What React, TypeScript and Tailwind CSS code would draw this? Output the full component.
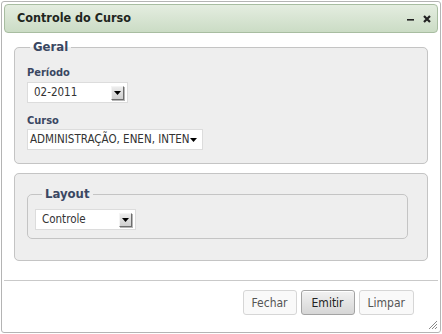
import React from 'react';

const font = { fontFamily: '"DejaVu Sans Condensed", "DejaVu Sans", Tahoma, sans-serif' };

// small old-style dropdown button used by the native-looking selects
function DropButton() {
  return (
    <div className="w-[13px] h-[14px] border border-t-[#f4f4f4] border-l-[#f4f4f4] border-r-[#6d6d6d] border-b-[#6d6d6d] bg-gradient-to-b from-[#ececec] to-[#cfcfcf] flex items-center justify-center shadow-[1px_1px_0_#b5b5b5]">
      <svg width="7" height="5" viewBox="0 0 7 5">
        <path d="M0 1h7L3.5 5z" fill="#000" />
      </svg>
    </div>
  );
}

function Select({ value, width }: { value: string; width: string }) {
  return (
    <div className={`${width} h-[21px] bg-white border border-[#dcdcdc] flex items-center pl-[6px] pr-[3px] justify-between`}>
      <span className="text-[11.5px] text-[#333]">{value}</span>
      <DropButton />
    </div>
  );
}

function Btn({ label, primary }: { label: string; primary?: boolean }) {
  return (
    <button
      className={
        primary
          ? 'h-[25px] px-[10px] rounded-[3px] border border-[#a3a3a3] bg-gradient-to-b from-[#f2f2f2] to-[#d6d6d6] text-[12px] text-[#222] shadow-[inset_0_1px_0_#fff]'
          : 'h-[25px] px-[8px] rounded-[3px] border border-[#d6d6d6] bg-[#f9f9f9] text-[12px] text-[#555]'
      }
    >
      {label}
    </button>
  );
}

export default function App() {
  return (
    <div style={font} className="w-[442px] h-[334px] bg-white overflow-hidden">
      <div className="ml-[1px] mt-[1px] w-[440px] h-[332px] border border-[#b4b4b4] rounded-[3px] bg-white flex flex-col p-[2px]">
        {/* Title bar */}
        <div className="h-[29px] rounded-[4px] border border-[#a8bda1] bg-gradient-to-b from-[#e4ede0] to-[#cbdcc5] flex items-center justify-between pl-[12px] pr-[6px]">
          <span className="text-[12.5px] font-bold text-[#1e261e]">Controle do Curso</span>
          <div className="flex items-center gap-[9px]">
            <svg width="7" height="8" viewBox="0 0 7 8">
              <rect x="0" y="4" width="7" height="1.6" fill="#222" />
            </svg>
            <svg width="8" height="8" viewBox="0 0 8 8">
              <path d="M1 1l6 6M7 1l-6 6" stroke="#222" strokeWidth="2.2" />
            </svg>
          </div>
        </div>

        {/* Content */}
        <div className="flex-1 px-[10px] pt-[7px]">
          <fieldset className="border border-[#c4c4c4] rounded-[5px] bg-[#eeeeee] pl-[12px] pr-[12px] pb-[13px] pt-[12px]">
            <legend className="ml-[3px] px-[3px] text-[13px] font-bold text-[#3a4762] leading-[14px]">Geral</legend>
            <div className="text-[11px] font-bold text-[#3a4762] leading-[13px]">Período</div>
            <div className="mt-[3px]">
              <Select value="02-2011" width="w-[101px]" />
            </div>
            <div className="mt-[11px] text-[11px] font-bold text-[#3a4762] leading-[13px]">Curso</div>
            <div className="mt-[2px] w-[176px] h-[21px] bg-white border border-[#dcdcdc] flex items-center justify-between pl-[2px] pr-[5px]">
              <span className="text-[11.5px] text-[#333] whitespace-nowrap">ADMINISTRAÇÃO, ENEN, INTEN</span>
              <svg width="7" height="4" viewBox="0 0 7 4" className="shrink-0">
                <path d="M0 0h7L3.5 4z" fill="#000" />
              </svg>
            </div>
          </fieldset>

          <fieldset className="mt-[9px] border border-[#c4c4c4] rounded-[5px] bg-[#eeeeee] pl-[12px] pr-[19px] pt-[13px] pb-[21px]">
            <fieldset className="border border-[#c4c4c4] rounded-[5px] pl-[7px] pb-[8px] pt-[8px]">
              <legend className="ml-[7px] px-[3px] text-[13px] font-bold text-[#3a4762] leading-[14px]">Layout</legend>
              <Select value="Controle" width="w-[101px]" />
            </fieldset>
          </fieldset>
        </div>

        {/* Footer */}
        <div className="border-t border-[#c9c9c9] h-[50px] relative flex items-start justify-end pt-[9px] pr-[24px] gap-[4px]">
          <Btn label="Fechar" />
          <Btn label="Emitir" primary />
          <Btn label="Limpar" />
          <svg width="9" height="9" viewBox="0 0 9 9" className="absolute right-[1px] bottom-[1px]">
            <path d="M9 1L1 9M9 4L4 9M9 7L7 9" stroke="#8a8a8a" strokeWidth="1" />
          </svg>
        </div>
      </div>
    </div>
  );
}
